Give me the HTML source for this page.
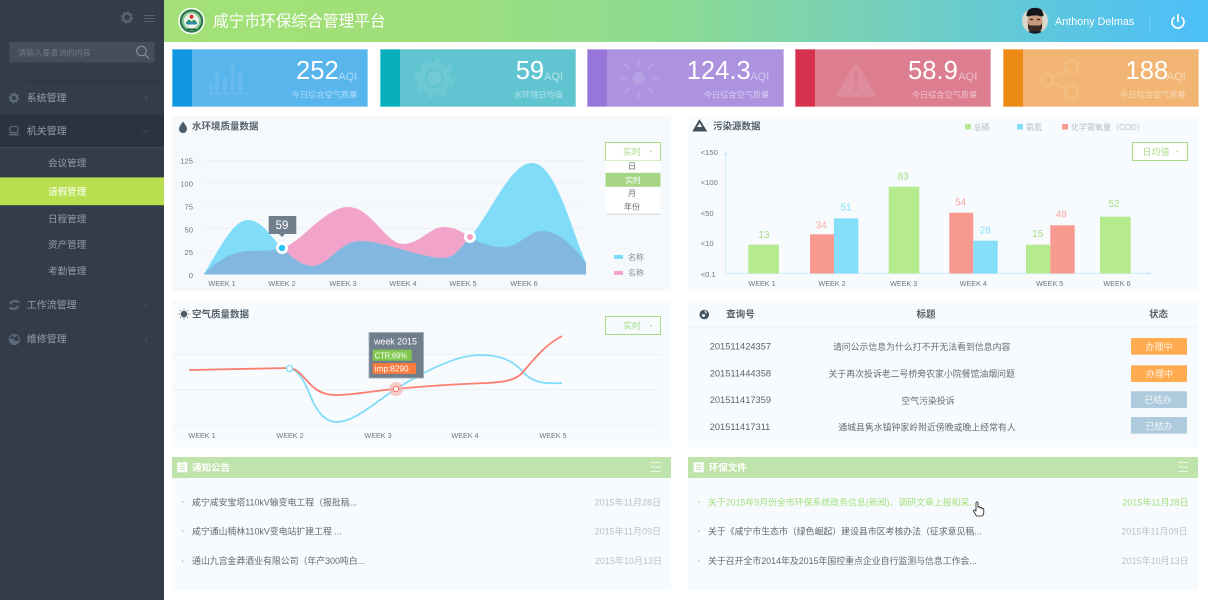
<!DOCTYPE html>
<html lang="zh-CN">
<head>
<meta charset="utf-8">
<title>咸宁市环保综合管理平台</title>
<style>
html,body{margin:0;padding:0;width:1208px;height:600px;overflow:hidden;background:#fff}
svg{display:block}
text{font-family:"Liberation Sans","Noto Sans CJK SC",sans-serif;dominant-baseline:central;transform:translateY(.8px)}
.m{text-anchor:middle}.e{text-anchor:end}
.nav{font-size:10px;fill:#939da9}
.sub{font-size:9.6px;fill:#939da9}
.tt{font-size:9.5px;fill:#56626c;font-weight:700}
.wk{font-size:7.2px;fill:#6f7478}
.ax{font-size:7.6px;fill:#6f7478}
.num{font-size:25.6px;fill:#fff}
.aqi{font-size:11px;fill:#fff;fill-opacity:.5}
.cap{font-size:8.2px;fill:#fff;fill-opacity:.5}
.li{font-size:8.9px;fill:#62686c}
.dt{font-size:9px;fill:#b9c0c5}
.id{font-size:9.3px;fill:#5d6468}
.ti{font-size:8.9px;fill:#666c70;text-anchor:middle}
.hd{font-size:9.5px;fill:#5a6268;font-weight:700;text-anchor:middle}
.bd{font-size:9px;fill:#fff;text-anchor:middle;fill-opacity:.85}
.dd{font-size:9px;fill:#a6dc85;text-anchor:middle}
.op{font-size:8px;fill:#666c70;text-anchor:middle}
.lg{font-size:8px;fill:#b9bec2}
.edge{fill:none;stroke:#fff;stroke-opacity:.35;stroke-width:1}
</style>
</head>
<body>
<svg width="1208" height="600" viewBox="0 0 1208 600" xmlns="http://www.w3.org/2000/svg">
<defs>
<linearGradient id="hg" x1="0" x2="1" y1="0" y2="0">
<stop offset="0" stop-color="#a3e077"/><stop offset=".23" stop-color="#a0df79"/><stop offset=".5" stop-color="#8bdb95"/><stop offset=".65" stop-color="#7ad1b4"/><stop offset=".83" stop-color="#5fc8db"/><stop offset="1" stop-color="#4cbffa"/>
</linearGradient>
<clipPath id="pinkclip"><path d="M204,274 C220,258 235,251 250,251 C262,251 270,251 282,248 C300,244 325,207 348,207 C372,207 385,244 403,244 C420,244 430,227 443,227 C455,227 462,232 470,237 C482,244 492,247 503,247 C520,247 528,231 542,231 C560,231 575,248 586,263 V274 Z"/></clipPath>
<clipPath id="av"><circle cx="1035" cy="20.7" r="13"/></clipPath>
</defs>

<rect width="1208" height="600" fill="#fff"/>

<!-- sidebar -->
<rect x="0" y="0" width="164" height="600" fill="#333c49"/>
<g fill="none" stroke="#566273">
<circle cx="127" cy="17.5" r="4" stroke-width="2.4"/>
<circle cx="127" cy="17.5" r="5.5" stroke-width="1.6" stroke-dasharray="2 2.3"/>
<path d="M144 15.5h11M144 18.5h11M144 21.5h11" stroke-width="1"/>
</g>
<rect x="9.3" y="42" width="145.4" height="20.5" fill="#454f5c"/>
<text x="18" y="52" font-size="8.1" fill="#6f7883">请输入要查询的内容</text>
<g fill="none" stroke="#8c95a0" stroke-width="1"><circle cx="141.500" cy="51" r="4.800"/><path d="M145 54.500l4 4"/></g>
<path d="M26 80.700H164" stroke="#2e3744" stroke-width="1.500"/>
<g fill="none" stroke="#5b6878">
<circle cx="14" cy="98" r="3.200" stroke-width="2.400"/>
<circle cx="14" cy="98" r="4.600" stroke-width="1.600" stroke-dasharray="1.800 1.800"/>
</g>
<text x="26.700" y="98" class="nav">系统管理</text>
<path d="M145 95.500l2.500 2.500-2.500 2.500" fill="none" stroke="#465160" stroke-width=".9"/>
<rect x="0" y="114" width="164" height="33" fill="#2b3340"/>
<rect x="0" y="147" width="164" height="1" fill="#3e4856"/>
<g fill="none" stroke="#5b6878" stroke-width="1.300"><rect x="10" y="126.500" width="8" height="6" rx="1.500"/><path d="M9 134.500h10" stroke-width="1.800"/></g>
<text x="26.700" y="131" class="nav">机关管理</text>
<path d="M143 130l2.500 2.500 2.500-2.500" fill="none" stroke="#465160" stroke-width=".9"/>
<text x="48" y="163" class="sub">会议管理</text>
<rect x="0" y="177.400" width="164" height="27.800" fill="#b8df4f"/>
<text x="48" y="191.500" class="sub" style="fill:#fff">请假管理</text>
<text x="48" y="219" class="sub">日程管理</text>
<text x="48" y="244.500" class="sub">资产管理</text>
<text x="48" y="271" class="sub">考勤管理</text>
<path d="M26 288.300H164M26 321.700H164M26 355H164" stroke="#2e3744" stroke-width="1"/>
<g fill="none" stroke="#5b6878" stroke-width="2.400"><path d="M19 302.500c-2-2-7-2-9 1.500"/><path d="M9.500 307.500c2 2 7 2 9-1.500"/></g>
<text x="26.700" y="305" class="nav">工作流管理</text>
<path d="M147.500 302.500l-2.500 2.500 2.500 2.500" fill="none" stroke="#465160" stroke-width=".9"/>
<circle cx="14.300" cy="339.500" r="5" fill="none" stroke="#5b6878" stroke-width="1.200"/>
<path d="M9.300 339.500a5 5 0 0 0 10 0a3 3 0 0 1-3 1.500a3 3 0 0 1-3-3z" fill="#5b6878"/>
<circle cx="14.500" cy="336" r="1.300" fill="#5b6878"/>
<text x="26.700" y="339" class="nav">维修管理</text>
<path d="M147.500 336.500l-2.500 2.500 2.500 2.500" fill="none" stroke="#465160" stroke-width=".9"/>

<!-- header -->
<rect x="164" y="0" width="1044" height="42" fill="url(#hg)"/>
<circle cx="191.500" cy="21" r="13.300" fill="#fff"/>
<circle cx="191.500" cy="21" r="11.800" fill="#2c7a4b"/>
<circle cx="191.500" cy="21" r="9.500" fill="#8fc79a"/>
<circle cx="191.500" cy="21" r="7.500" fill="#e8f3e4"/>
<circle cx="191.500" cy="16.800" r="2" fill="#d8322f"/>
<path d="M186 22.500l2.800-3 2.700 2 2.700-2 2.800 3v1.500h-11z" fill="#2a8c5a"/>
<rect x="186.500" y="22.500" width="10" height="2" fill="#3489c9"/>
<path d="M187 29.300h9" stroke="#1e5a38" stroke-width="1.300"/>
<text x="213" y="21" font-size="15.700" fill="#fff">咸宁市环保综合管理平台</text>
<g clip-path="url(#av)">
<rect x="1022" y="7" width="26" height="28" fill="#d8d6cd"/>
<ellipse cx="1035" cy="22" rx="7.500" ry="10" fill="#c79a7d"/>
<path d="M1026.500 16c0-6 4-9 8.500-9s8.500 3 8.500 9l-2 .5c-4-1.500-9-1.500-13 0z" fill="#14181d"/>
<path d="M1028 23c1 3 3 2.500 7 2.500s6 .5 7-2.500v5c-1 4-4 5-7 5s-6-1-7-5z" fill="#3a2c25"/>
<path d="M1024 35c1-3 5-4 11-4s10 1 11 4z" fill="#14212c"/>
<path d="M1030 19.500h3M1037 19.500h3" stroke="#2a1e18" stroke-width="1.200"/>
</g>
<text x="1055" y="21.200" font-size="10.800" fill="#fff">Anthony Delmas</text>
<path d="M1150 13V32" stroke="#6fcdf5" stroke-width="1"/>
<g fill="none" stroke="#fff" stroke-width="1.700" stroke-linecap="round"><path d="M1174 17.500a6 6 0 1 0 8 0"/><path d="M1178 14.500v7"/></g>

<!-- stat cards -->
<g>
<rect x="172" y="49" width="196" height="58" fill="#58b6ec"/><rect x="172" y="49" width="20" height="58" fill="#1097e1"/>
<rect x="172.500" y="49.500" width="195" height="57" class="edge"/>
<g fill="#fff" fill-opacity=".09"><rect x="209" y="83.300" width="3.700" height="9.700"/><rect x="215.300" y="71" width="3.700" height="22"/><rect x="223" y="77" width="3.800" height="16"/><rect x="230.700" y="64.300" width="3.700" height="28.700"/><rect x="238.300" y="71.700" width="3.700" height="21.300"/><rect x="207" y="93" width="40.500" height="1.700"/></g>
<text x="296" y="70" class="num">252</text><text x="357.300" y="76" class="aqi e">AQI</text><text x="357.300" y="94" class="cap e">今日综合空气质量</text>

<rect x="380" y="49" width="196" height="58" fill="#61c5d1"/><rect x="380" y="49" width="20" height="58" fill="#07afbd"/>
<rect x="380.500" y="49.500" width="195" height="57" class="edge"/>
<g fill="none" stroke="#fff" opacity=".08"><circle cx="434.300" cy="78.300" r="13" stroke-width="6.500"/><circle cx="434.300" cy="78.300" r="18" stroke-width="4" stroke-dasharray="6.500 7.640"/></g>
<circle cx="434.300" cy="78.300" r="7" fill="#fff" opacity=".1"/>
<text x="515.700" y="70" class="num">59</text><text x="563" y="76" class="aqi e">AQI</text><text x="563" y="94" class="cap e">水环境日均值</text>

<rect x="587" y="49" width="197" height="58" fill="#ad92e0"/><rect x="587" y="49" width="20" height="58" fill="#9775d9"/>
<rect x="587.500" y="49.500" width="196" height="57" class="edge"/>
<g stroke="#fff" stroke-opacity=".1" stroke-width="3" stroke-linecap="round"><path d="M638.700 60v5M638.700 92v5M620 78.300h5M652.500 78.300h5M625.500 65l3.500 3.500M652 65l-3.500 3.500M625.500 91.500l3.500-3.500M652 91.500l-3.500-3.500"/></g>
<circle cx="638.700" cy="78.300" r="6.300" fill="#fff" fill-opacity=".13"/>
<text x="686.700" y="70" class="num">124.3</text><text x="769.300" y="76" class="aqi e">AQI</text><text x="769.300" y="94" class="cap e">今日综合空气质量</text>

<rect x="795" y="49" width="196" height="58" fill="#dc7e90"/><rect x="795" y="49" width="20" height="58" fill="#d6324f"/>
<rect x="795.500" y="49.500" width="195" height="57" class="edge"/>
<path d="M856 61.500L875.500 95.500a.8 .8 0 0 1-.7 1.200H837.200a.8 .8 0 0 1-.7-1.200z" fill="#fff" fill-opacity=".11"/>
<path d="M854 71h4l-.6 13h-2.800zM854.200 86h3.600v4h-3.600z" fill="#dc7e90"/>
<text x="908" y="70" class="num">58.9</text><text x="977.300" y="76" class="aqi e">AQI</text><text x="977.300" y="94" class="cap e">今日综合空气质量</text>

<rect x="1003" y="49" width="196" height="58" fill="#f2b573"/><rect x="1003" y="49" width="20" height="58" fill="#ed8a16"/>
<rect x="1003.500" y="49.500" width="195" height="57" class="edge"/>
<g fill="none" stroke="#fff" stroke-opacity=".1" stroke-width="2.800"><circle cx="1071.700" cy="66.700" r="6.300"/><circle cx="1046.700" cy="80" r="6.300"/><circle cx="1071.700" cy="92" r="6.300"/><path d="M1052.500 77l13.500-7M1052.500 83l13.500 6"/></g>
<text x="1125.500" y="70" class="num">188</text><text x="1185.700" y="76" class="aqi e">AQI</text><text x="1185.700" y="94" class="cap e">今日综合空气质量</text>
</g>

<!-- panel: water -->
<rect x="172" y="116" width="499" height="175" fill="#f5f9fc"/>
<path d="M183 121.500c-2 3-4 5-4 7.500a4 4 0 0 0 8 0c0-2.500-2-4.500-4-7.500z" fill="#4a5a66"/>
<text x="192" y="126.300" class="tt">水环境质量数据</text>
<path d="M204 160.500H586M204 183H586M204 206H586M204 228.500H586M204 251.500H586" stroke="#edf2f6" stroke-width="1"/>
<g><text x="193" y="160" class="ax e">125</text><text x="193" y="183" class="ax e">100</text><text x="193" y="206" class="ax e">75</text><text x="193" y="229" class="ax e">50</text><text x="193" y="251.500" class="ax e">25</text><text x="193" y="274.500" class="ax e">0</text></g>
<path d="M204,274 C220,258 235,251 250,251 C262,251 270,251 282,248 C300,244 325,207 348,207 C372,207 385,244 403,244 C420,244 430,227 443,227 C455,227 462,232 470,237 C482,244 492,247 503,247 C520,247 528,231 542,231 C560,231 575,248 586,263 V274 Z" fill="#f2a3c9"/>
<path d="M204,274 C222,244 234,220 248,220 C262,220 272,238 282,248 C292,258 302,266 313,266 C328,266 340,241 360,241 C385,241 420,258 443,258 C455,258 460,248 470,237 C490,215 510,163 532,163 C555,163 570,225 586,263 V274 Z" fill="#81dcf9"/>
<path d="M204,274 C222,244 234,220 248,220 C262,220 272,238 282,248 C292,258 302,266 313,266 C328,266 340,241 360,241 C385,241 420,258 443,258 C455,258 460,248 470,237 C490,215 510,163 532,163 C555,163 570,225 586,263 V274 Z" fill="#82b8e0" clip-path="url(#pinkclip)"/>
<path d="M204 274.500H586" stroke="#b9dff5" stroke-width="1"/>
<rect x="268.700" y="216" width="27.600" height="18" fill="#717f8d"/>
<path d="M279 234h6l-3 3z" fill="#717f8d"/>
<text x="282" y="225" class="m" font-size="11.500" fill="#fff">59</text>
<circle cx="282" cy="248" r="6" fill="#fff"/><circle cx="282" cy="248" r="3.200" fill="#1fc3f5"/>
<circle cx="470" cy="237" r="6" fill="#fff"/><circle cx="470" cy="237" r="3" fill="#f49ec4"/>
<text x="222" y="282.500" class="wk m">WEEK 1</text><text x="282" y="282.500" class="wk m">WEEK 2</text><text x="343" y="282.500" class="wk m">WEEK 3</text><text x="403" y="282.500" class="wk m">WEEK 4</text><text x="463" y="282.500" class="wk m">WEEK 5</text><text x="524" y="282.500" class="wk m">WEEK 6</text>
<rect x="605.500" y="142.500" width="55" height="18" fill="#fff" stroke="#a6dc85"/>
<text x="632" y="151" class="dd">实时</text><circle cx="651" cy="151.500" r=".9" fill="#a6dc85"/>
<rect x="605.500" y="160.500" width="55" height="54" fill="#fff"/>
<rect x="605.500" y="172.800" width="55" height="14" fill="#a6d586"/>
<rect x="605.500" y="213.500" width="55" height="1.500" fill="#dfe5e9"/>
<text x="632" y="165.500" class="op">日</text><text x="633" y="179.500" class="op" style="fill:#fff">实时</text><text x="632" y="192.500" class="op">月</text><text x="632" y="206" class="op">年份</text>
<rect x="614" y="255" width="9" height="4" fill="#81dcf9"/><text x="628" y="256.500" class="lg" style="fill:#8a8f93">名称</text>
<rect x="614" y="271" width="9" height="4" fill="#f2a3c9"/><text x="628" y="272.200" class="lg" style="fill:#8a8f93">名称</text>

<!-- panel: pollution -->
<rect x="688" y="116" width="510" height="175" fill="#f7fbfe"/>
<path d="M699.500 121l-5.500 9.500h11.500z" fill="none" stroke="#44525e" stroke-width="2"/><path d="M695 130h10l-2-3h-6z" fill="#44525e"/>
<text x="713" y="126.300" class="tt">污染源数据</text>
<rect x="965" y="124" width="6" height="5.500" fill="#b5ea8e"/><text x="973.700" y="126.500" class="lg">总磷</text>
<rect x="1017" y="124" width="6" height="5.500" fill="#85dffb"/><text x="1026" y="126.500" class="lg">氨氮</text>
<rect x="1062" y="124" width="6" height="5.500" fill="#f89a90"/><text x="1071" y="126.500" class="lg">化学需氧量（COD）</text>
<rect x="1132.500" y="142.500" width="55" height="18" fill="#fff" stroke="#a6dc85"/>
<text x="1156" y="151" class="dd">日均值</text><circle cx="1177.500" cy="151.500" r=".9" fill="#a6dc85"/>
<text x="700.700" y="151.500" class="ax">&lt;150</text><text x="700.700" y="181.800" class="ax">&lt;100</text><text x="700.700" y="212.500" class="ax">&lt;50</text><text x="700.700" y="242.500" class="ax">&lt;10</text><text x="700.700" y="273.500" class="ax">&lt;0.1</text>
<path d="M725.500 152V273.500H1150" fill="none" stroke="#d5eefb" stroke-width="1.200"/>
<path d="M723.500 156l2-6 2 6zM1147 271.500l6 2-6 2z" fill="#d5eefb"/>
<g fill="#b5ea8e"><rect x="748.300" y="244.700" width="30.700" height="28.800"/><rect x="888.700" y="186.700" width="30.600" height="86.800"/><rect x="1026" y="244.700" width="24.300" height="28.800"/><rect x="1100" y="216.700" width="30.700" height="56.800"/></g>
<g fill="#f89a90"><rect x="810" y="234.300" width="24" height="39.200"/><rect x="949.300" y="212.700" width="24" height="60.800"/><rect x="1050.300" y="225.300" width="24.400" height="48.200"/></g>
<g fill="#85dffb"><rect x="834" y="218.300" width="24.300" height="55.200"/><rect x="973.300" y="240.700" width="24.400" height="32.800"/></g>
<g font-size="10" text-anchor="middle">
<text x="764" y="234.500" fill="#a6dc85">13</text><text x="821.300" y="225.200" fill="#f8a9a1">34</text><text x="846" y="207.200" fill="#85dffb">51</text><text x="903.300" y="176.200" fill="#a6dc85">83</text><text x="960.700" y="202.200" fill="#f8a9a1">54</text><text x="985.300" y="230.200" fill="#85dffb">28</text><text x="1037.700" y="233.500" fill="#a6dc85">15</text><text x="1061.300" y="214.200" fill="#f8a9a1">48</text><text x="1114" y="203.500" fill="#a6dc85">52</text>
</g>
<text x="762" y="282.500" class="wk m">WEEK 1</text><text x="832" y="282.500" class="wk m">WEEK 2</text><text x="903.700" y="282.500" class="wk m">WEEK 3</text><text x="973.300" y="282.500" class="wk m">WEEK 4</text><text x="1049.700" y="282.500" class="wk m">WEEK 5</text><text x="1117" y="282.500" class="wk m">WEEK 6</text>

<!-- panel: air -->
<rect x="172" y="301" width="499" height="146" fill="#f7fbfe"/>
<circle cx="184" cy="314" r="3.300" fill="#4a5a66"/>
<path d="M184 308.500v1.500M184 318v1.500M178.500 314h1.500M188 314h1.500M180 310l1 1M188 310l-1 1M180 318l1-1M188 318l-1-1" stroke="#6a7883" stroke-width=".8"/>
<text x="192" y="314.300" class="tt">空气质量数据</text>
<rect x="605.500" y="316.500" width="55" height="18" fill="#f7fbfe" stroke="#a6dc85"/>
<text x="632" y="325" class="dd">实时</text><circle cx="651" cy="325.500" r=".9" fill="#a6dc85"/>
<path d="M173 354.500H661M173 390H661M173 425.500H660" stroke="#eaf2f6" stroke-width="1.200"/>
<path d="M289 368C300 370 306 385 313 402C321 418 329 422 337 422C355 422 378 400 396 389C420 374 455 355 480 355C505 355 516 364 523 372C533 383 545 384 562 383" fill="none" stroke="#81dcf9" stroke-width="1.800"/>
<path d="M189 370L289 368C305 369 308 395 335 395C355 395 378 390 396 389C425 386 460 384 487 383C510 382 518 378 523 372C535 358 545 345 562 336" fill="none" stroke="#fb7f70" stroke-width="1.800"/>
<rect x="369" y="332.500" width="54.500" height="45.500" fill="#717f8d" stroke="#a0aab3" stroke-width=".8"/>
<text x="374" y="340.500" font-size="8.900" fill="#fff">week 2015</text>
<rect x="372.700" y="349.700" width="39" height="11" fill="#82c84f"/><text x="374.800" y="354.500" font-size="8.500" fill="#fff" textLength="32" lengthAdjust="spacingAndGlyphs">CTR:69%</text>
<rect x="372.700" y="363" width="43.300" height="11" fill="#f97b3f"/><text x="374.800" y="367.800" font-size="8.500" fill="#fff" textLength="33.700" lengthAdjust="spacingAndGlyphs">imp:8290</text>
<circle cx="289.500" cy="368.500" r="3" fill="#fff" stroke="#81dcf9" stroke-width="1.300"/>
<circle cx="396" cy="389" r="7" fill="#f7b7b1" fill-opacity=".7"/>
<circle cx="396" cy="389" r="2.600" fill="#fff" stroke="#fb7f70" stroke-width="1.100"/>
<text x="202" y="434.500" class="wk m">WEEK 1</text><text x="290" y="434.500" class="wk m">WEEK 2</text><text x="378" y="434.500" class="wk m">WEEK 3</text><text x="465" y="434.500" class="wk m">WEEK 4</text><text x="553" y="434.500" class="wk m">WEEK 5</text>

<!-- panel: table -->
<rect x="688" y="301" width="510" height="146" fill="#f7fbfe"/>
<rect x="688" y="326.500" width="510" height="1.500" fill="#eef5f9"/>
<circle cx="704.300" cy="314.500" r="4.800" fill="#44525e"/>
<path d="M704 310l3 2-1 2z" fill="#f7fbfe"/><circle cx="703.500" cy="315.500" r="1.500" fill="#f7fbfe"/>
<text x="740.500" y="314.300" class="hd">查询号</text><text x="926" y="314.300" class="hd">标题</text><text x="1158.500" y="314.300" class="hd">状态</text>
<text x="709.700" y="345.800" class="id">201511424357</text><text x="921.700" y="346.300" class="ti">请问公示信息为什么打不开无法看到信息内容</text>
<rect x="1131" y="338" width="56" height="16.700" fill="#ffac50"/><text x="1159" y="346" class="bd">办理中</text>
<text x="709.700" y="372.500" class="id">201511444358</text><text x="921.700" y="373" class="ti">关于再次投诉老二号桥旁农家小院餐馆油烟问题</text>
<rect x="1131" y="365.300" width="56" height="16.700" fill="#ffac50"/><text x="1159.500" y="373" class="bd">办理中</text>
<text x="709.700" y="399.200" class="id">201511417359</text><text x="928" y="400" class="ti">空气污染投诉</text>
<rect x="1131" y="391.300" width="56" height="16.700" fill="#adcbdd"/><text x="1158" y="399.300" class="bd">已结办</text>
<text x="709.700" y="426" class="id">201511417311</text><text x="927" y="426.500" class="ti">通城县隽水镇钟家岭附近傍晚或晚上经常有人</text>
<rect x="1131" y="417" width="56" height="16.700" fill="#adcbdd"/><text x="1159" y="425.500" class="bd">已结办</text>

<!-- notices -->
<rect x="172" y="478" width="499" height="112" fill="#f7fbfe"/>
<rect x="172" y="457" width="499" height="21" fill="#bfe4ab"/>
<rect x="177.300" y="462.300" width="10" height="10" fill="#fff"/><path d="M179.500 465h5.500M179.500 467.300h5.500M179.500 469.600h5.500" stroke="#bfe4ab" stroke-width=".9"/>
<text x="192" y="467.500" font-size="9.500" fill="#fff" font-weight="700">通知公告</text>
<path d="M650.700 462.500H661M650.700 467H661M650.700 471.500H661" stroke="#fff" stroke-opacity=".75" stroke-width=".9"/>
<path d="M182 500.800l1.500 1.200-1.500 1.200zM182 529.800l1.500 1.200-1.500 1.200zM182 559.800l1.500 1.200-1.500 1.200z" fill="#aab2b8"/>
<text x="192" y="501.500" class="li">咸宁咸安宝塔110kV输变电工程（报批稿...</text>
<text x="192" y="530.800" class="li">咸宁通山楠林110kV变电站扩建工程 ...</text>
<text x="192" y="560.200" class="li">通山九宫金莽酒业有限公司（年产300吨白...</text>
<text x="661" y="501.500" class="dt e">2015年11月28日</text>
<text x="661" y="530.800" class="dt e">2015年11月09日</text>
<text x="662" y="560.200" class="dt e">2015年10月13日</text>

<rect x="688" y="478" width="510" height="112" fill="#f7fbfe"/>
<rect x="688" y="457" width="510" height="21" fill="#bfe4ab"/>
<rect x="693.700" y="462.300" width="10" height="10" fill="#fff"/><path d="M696 465h5.500M696 467.300h5.500M696 469.600h5.500" stroke="#bfe4ab" stroke-width=".9"/>
<text x="708.700" y="467.500" font-size="9.500" fill="#fff" font-weight="700">环保文件</text>
<path d="M1178 462.500H1188M1178 467H1188M1178 471.500H1188" stroke="#fff" stroke-opacity=".75" stroke-width=".9"/>
<path d="M698.500 500.800l1.500 1.200-1.500 1.200z" fill="#a5e07f"/>
<path d="M698.500 529.800l1.500 1.200-1.500 1.200zM698.500 559.800l1.500 1.200-1.500 1.200z" fill="#aab2b8"/>
<text x="708" y="501.500" class="li" style="fill:#a5e07f">关于2015年9月份全市环保系统政务信息(新闻)、调研文章上报和采...</text>
<text x="708" y="530.800" class="li">关于《咸宁市生态市（绿色崛起）建设县市区考核办法（征求意见稿...</text>
<text x="708" y="560.200" class="li">关于召开全市2014年及2015年国控重点企业自行监测与信息工作会...</text>
<text x="1188.700" y="501.500" class="dt e" style="fill:#a5e07f">2015年11月28日</text>
<text x="1187.700" y="530.800" class="dt e">2015年11月09日</text>
<text x="1188.700" y="560.200" class="dt e">2015年10月13日</text>

<!-- cursor -->
<path d="M976 503c0-1.500 2-1.500 2 0v4.500c0-1.200 2-1.200 2 0v.8c0-1.200 2-1.200 2 0v.8c0-1 1.800-1 1.800 .2v3.200c0 1.500-1 3-1.500 3.500h-5.800l-2.800-4.500c-.8-1.300 .8-2.200 1.700-1.100l.6 .8z" fill="#fff" stroke="#222" stroke-width=".8" stroke-linejoin="round"/>
</svg>
</body>
</html>
